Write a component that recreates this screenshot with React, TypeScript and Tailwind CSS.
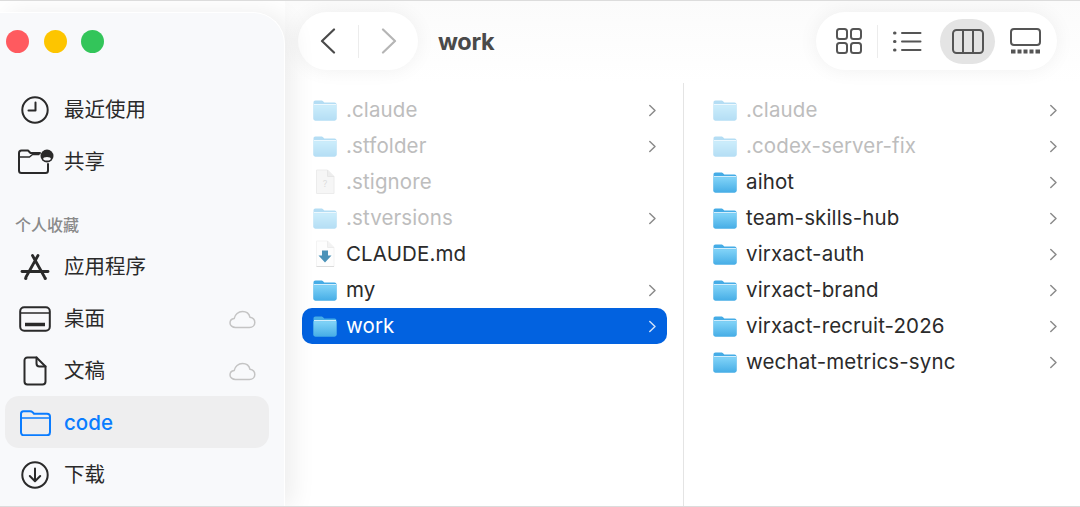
import { ReactNode } from "react";

const FolderIcon = ({ faded }: { faded?: boolean }) => (
  <svg width="24" height="21" viewBox="0 0 24 21" className={faded ? "opacity-40" : ""}>
    <defs>
      <linearGradient id="folderBody" x1="0" y1="0" x2="0" y2="1">
        <stop offset="0" stopColor="#82d4f8" />
        <stop offset="1" stopColor="#46ade6" />
      </linearGradient>
    </defs>
    <path d="M2.500 0.500h5.600c1 0 1.500 .3 2.200 1l1 1h10.200c1.200 0 2 .8 2 2v14c0 1.300-.8 2-2 2H2.500c-1.300 0-2-.7-2-2v-16c0-1.300 .7-2 2-2z" fill="#45ace6" />
    <path d="M.5 5.200h23v13.300c0 1.300-.8 2-2 2H2.500c-1.300 0-2-.7-2-2z" fill="url(#folderBody)" />
    <path d="M1 4.600h22" stroke="#e2f6ff" strokeWidth="1" />
  </svg>
);

const Chevron = ({ white }: { white?: boolean }) => (
  <svg width="9" height="13" viewBox="0 0 9 13" fill="none" stroke={white ? "#cfe0f8" : "#8b8b8b"} strokeWidth="1.500" strokeLinecap="round" strokeLinejoin="round">
    <path d="M1.800 1.500 7 6.500l-5.200 5" />
  </svg>
);

const UnknownDoc = () => (
  <svg width="22" height="26" viewBox="0 0 22 26" fill="none">
    <path d="M2.500 1h11L20 7.500V24.500H2.500z" fill="#f6f6f6" stroke="#ececec" />
    <path d="M13.500 1v6.500H20" fill="#ededed" stroke="#e6e6e6" />
    <text x="11" y="18" textAnchor="middle" fontSize="9" fill="#dedede" fontFamily="Inter, sans-serif">?</text>
  </svg>
);

const MdDoc = () => (
  <svg width="22" height="28" viewBox="0 0 22 28" fill="none">
    <path d="M2.500 1h11L20 7.500V26.500H2.500z" fill="#fdfdfd" stroke="#f3f3f3" />
    <path d="M13.500 1v6.500H20" fill="#f2f2f2" stroke="#ececec" />
    <path d="M2.500 26.500H20" stroke="#dcdcdc" />
    <path d="M8 10.500h6v5h3.500L11 22.500 4.500 15.500H8z" fill="#4b92b8" />
  </svg>
);

const Row = ({ name, kind = "folder", faded, arrow = true, selected }: { name: string; kind?: "folder" | "unknown" | "md"; faded?: boolean; arrow?: boolean; selected?: boolean }) => (
  <div className={`h-9 flex items-center rounded-[10px] pl-[11px] pr-[10px] ${selected ? "bg-[#0262e0] text-white" : faded ? "text-[#bdbdbd]" : "text-[#2b2b2b]"}`}>
    <div className="w-6 flex justify-center shrink-0">
      {kind === "folder" && <FolderIcon faded={faded} />}
      {kind === "unknown" && <UnknownDoc />}
      {kind === "md" && <MdDoc />}
    </div>
    <span className="ml-[9px] flex-1 text-[20.500px] leading-none tracking-[0.12px]">{name}</span>
    {arrow && <Chevron white={selected} />}
  </div>
);

const Cloud = () => (
  <svg width="27" height="19" viewBox="0 0 27 19" fill="none" stroke="#c4c4c4" strokeWidth="1.500">
    <path d="M6.500 17.500c-3 0-5.500-2-5.500-4.600 0-2.400 1.800-4.200 4.200-4.500C6 4.600 9.300 1.500 13.500 1.500c3.800 0 6.700 2.400 7.500 5.800 2.700.4 4.800 2.500 4.800 5.200 0 2.800-2.300 5-5.300 5z" />
  </svg>
);

const SideItem = ({ icon, label, cloud, active }: { icon: ReactNode; label: string; cloud?: boolean; active?: boolean }) => (
  <div className={`h-[52px] flex items-center rounded-[14px] ml-[5px] mr-[15px] pl-[13px] pr-[13px] ${active ? "bg-[#eeeeef] text-[#0a7cff] -mt-px mb-px pt-[2px]" : "text-[#2a2a2a]"}`}>
    <div className="w-[34px] flex justify-center shrink-0">{icon}</div>
    <span className={`ml-[12px] flex-1 text-[20.500px] leading-none ${active ? "font-medium" : ""}`}>{label}</span>
    {cloud && <Cloud />}
  </div>
);

const stroke = { fill: "none", stroke: "#2a2a2a", strokeWidth: 2, strokeLinecap: "round", strokeLinejoin: "round" } as const;

const ClockIcon = () => (
  <svg width="28" height="28" viewBox="0 0 28 28" {...stroke}>
    <circle cx="14" cy="14" r="12.700" />
    <path d="M14.500 6.500v8H7.500" />
  </svg>
);

const SharedIcon = () => (
  <svg width="36" height="28" viewBox="0 0 36 28" {...stroke} className="overflow-visible shrink-0">
    <path d="M23 5H13.500L11 2.500H4.500C3 2.500 2 3.500 2 5v17.500C2 24 3 25 4.500 25h24c1.500 0 2.500-1 2.500-2.500V16" />
    <path d="M3 9h9.500l3-2.500H22" strokeWidth="1.500" />
    <circle cx="30" cy="8" r="6.500" fill="#2a2a2a" stroke="none" />
    <ellipse cx="30" cy="10.800" rx="3.800" ry="1.800" fill="#f7f8fa" stroke="none" />
    <circle cx="30" cy="6.500" r="2.300" fill="#2a2a2a" stroke="none" />
  </svg>
);

const AppsIcon = () => (
  <svg width="30" height="28" viewBox="0 0 30 28" fill="none" stroke="#2a2a2a" strokeLinecap="round">
    <path d="M12.500 2.500 24.500 24M18 2.500 6 24" strokeWidth="2.800" />
    <path d="M2 18.500h26" strokeWidth="2.800" />
    <path d="M5.500 25.500h.5M25 25.500h.5" strokeWidth="2.800" />
  </svg>
);

const DesktopIcon = () => (
  <svg width="32" height="26" viewBox="0 0 32 26" {...stroke}>
    <rect x="1.200" y="1.200" width="29.600" height="23.600" rx="4" />
    <path d="M2 7h28" strokeWidth="1.500" />
    <path d="M6 18.500h20" strokeWidth="3.500" strokeLinecap="butt" />
  </svg>
);

const DocIcon = () => (
  <svg width="24" height="30" viewBox="0 0 24 30" {...stroke}>
    <path d="M4.500 1.500h9L22.500 10.500v15c0 1.800-1 3-3 3h-15c-2 0-3-1.200-3-3v-21c0-1.800 1-3 3-3z" />
    <path d="M13.500 1.500v6c0 2 1 3 3 3h6" />
  </svg>
);

const BlueFolderIcon = () => (
  <svg width="31" height="26" viewBox="0 0 31 26" fill="none" stroke="#0a7cff" strokeWidth="2" strokeLinejoin="round">
    <path d="M3.500 1.200h6.500c1.300 0 2 .4 2.800 1.200l1.200 1.300H27c1.800 0 3 1.200 3 3v15.600c0 1.800-1.200 3-3 3H4c-1.800 0-3-1.200-3-3V3.700c0-1.600.9-2.500 2.500-2.500z" />
    <path d="M1.500 8H30" strokeWidth="1.500" />
  </svg>
);

const DownloadIcon = () => (
  <svg width="28" height="28" viewBox="0 0 28 28" {...stroke}>
    <circle cx="14" cy="14" r="12.700" />
    <path d="M14 7.500v12.500M8.800 15l5.200 5.200 5.200-5.200" />
  </svg>
);

const tool = { fill: "none", stroke: "#555555", strokeWidth: 2 } as const;

export default function App() {
  return (
    <div className="w-[1080px] h-[507px] overflow-hidden bg-white border-t border-b border-[#dcdcdc] flex" style={{ fontFamily: 'Inter, "Noto Sans CJK SC", sans-serif' }}>
      {/* sidebar */}
      <aside className="w-[285px] shrink-0 mt-[11px] border-t border-r border-white rounded-tr-[32px] bg-[#f8f9fb] shadow-[8px_0_24px_rgba(0,0,0,0.07)] z-10">
        <div className="flex gap-[14.500px] pl-[6px] pt-[17px] h-[71px]">
          <div className="w-[23px] h-[23px] rounded-full bg-[#ff5a5f]" />
          <div className="w-[23px] h-[23px] rounded-full bg-[#fdc500]" />
          <div className="w-[23px] h-[23px] rounded-full bg-[#33c55a]" />
        </div>
        <SideItem icon={<ClockIcon />} label="最近使用" />
        <SideItem icon={<SharedIcon />} label="共享" />
        <div className="h-[53px] pl-[15px] pt-[27px] text-[16px] leading-[20px] font-medium text-[#8a8a8a]">个人收藏</div>
        <SideItem icon={<AppsIcon />} label="应用程序" />
        <SideItem icon={<DesktopIcon />} label="桌面" cloud />
        <SideItem icon={<DocIcon />} label="文稿" cloud />
        <SideItem icon={<BlueFolderIcon />} label="code" active />
        <SideItem icon={<DownloadIcon />} label="下载" />
      </aside>

      <main className="flex-1 flex flex-col min-w-0">
        {/* toolbar */}
        <header className="h-[82px] shrink-0 flex items-start pt-[11px] pl-[13px] pr-[23px] bg-gradient-to-b from-[#fbfbfb] to-white">
          <div className="w-[120px] h-[58px] rounded-[29px] bg-white shadow-[0_0_20px_rgba(0,0,0,0.06)] flex items-center">
            <div className="w-[60px] flex justify-center">
              <svg width="16" height="26" viewBox="0 0 16 26" fill="none" stroke="#4a4a4a" strokeWidth="2.200" strokeLinecap="round" strokeLinejoin="round">
                <path d="M14 1.500 2 13l12 11.500" />
              </svg>
            </div>
            <div className="w-px h-[33px] bg-[#ececec]" />
            <div className="flex-1 flex justify-center">
              <svg width="16" height="26" viewBox="0 0 16 26" fill="none" stroke="#b5b5b5" strokeWidth="2.200" strokeLinecap="round" strokeLinejoin="round">
                <path d="M2 1.500 14 13 2 24.500" />
              </svg>
            </div>
          </div>
          <span className="ml-[20px] h-[58px] pt-[2px] flex items-center text-[23.500px] font-bold tracking-[-0.3px] text-[#4a4a4a]">work</span>
          <div className="ml-auto w-[241px] h-[58px] rounded-[29px] bg-white shadow-[0_0_20px_rgba(0,0,0,0.06)] flex items-center pl-[20px]">
            <svg width="26" height="26" viewBox="0 0 26 26" {...tool}>
              <rect x="1" y="1" width="10" height="10" rx="2.500" />
              <rect x="15" y="1" width="10" height="10" rx="2.500" />
              <rect x="1" y="15" width="10" height="10" rx="2.500" />
              <rect x="15" y="15" width="10" height="10" rx="2.500" />
            </svg>
            <div className="ml-[15px] w-px h-[33px] bg-[#ececec]" />
            <svg width="29" height="21" viewBox="0 0 29 21" className="ml-[15px]" fill="none" stroke="#555555" strokeWidth="2" strokeLinecap="round">
              <path d="M9 2h18.500M9 10.500h18.500M9 19h18.500" />
              <path d="M1.500 2h.5M1.500 10.500h.5M1.500 19h.5" strokeWidth="3" />
            </svg>
            <div className="ml-[18px] w-[55px] h-[45px] rounded-[23px] bg-[#e4e4e4] flex items-center justify-center">
              <svg width="32" height="25" viewBox="0 0 32 25" {...tool}>
                <rect x="1" y="1" width="30" height="23" rx="3.500" />
                <path d="M11 1v23M21 1v23" />
              </svg>
            </div>
            <svg width="31" height="26" viewBox="0 0 31 26" className="ml-[15px]" fill="none" stroke="#555555" strokeWidth="2">
              <rect x="1" y="1" width="29" height="16" rx="3" />
              <path d="M1 23.500h4.500M7.500 23.500h4M13.500 23.500h4M19.500 23.500h4M25.500 23.500h4.500" strokeWidth="4" />
            </svg>
          </div>
        </header>

        {/* columns */}
        <div className="flex-1 flex min-h-0">
          <section className="w-[399px] shrink-0 border-r border-[#e4e4e4] pt-[9px] pl-[17px] pr-[16px]">
            <Row name=".claude" faded />
            <Row name=".stfolder" faded />
            <Row name=".stignore" kind="unknown" faded arrow={false} />
            <Row name=".stversions" faded />
            <Row name="CLAUDE.md" kind="md" arrow={false} />
            <Row name="my" />
            <Row name="work" selected />
          </section>
          <section className="flex-1 pt-[9px] pl-[18px] pr-[12px]">
            <Row name=".claude" faded />
            <Row name=".codex-server-fix" faded />
            <Row name="aihot" />
            <Row name="team-skills-hub" />
            <Row name="virxact-auth" />
            <Row name="virxact-brand" />
            <Row name="virxact-recruit-2026" />
            <Row name="wechat-metrics-sync" />
          </section>
        </div>
      </main>
    </div>
  );
}
